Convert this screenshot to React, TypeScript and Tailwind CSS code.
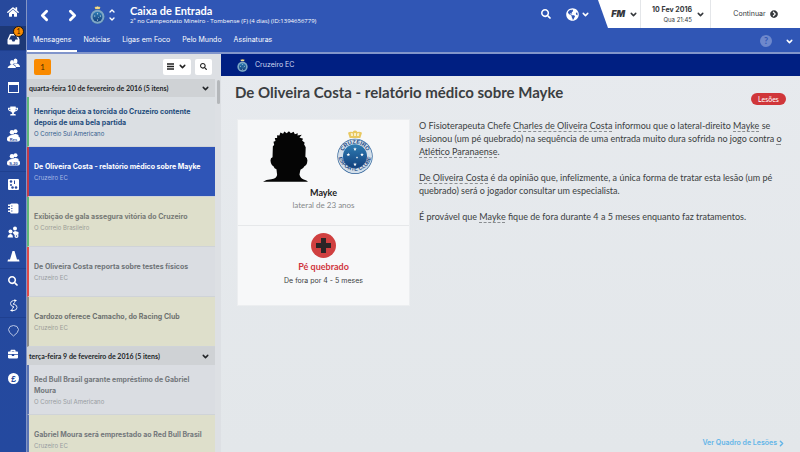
import { useState } from "react";
import type { ReactNode } from "react";
import { FaHome, FaTrophy, FaSearch, FaBriefcase, FaChevronCircleRight, FaGlobeAmericas } from "react-icons/fa";
import { FiChevronDown, FiChevronLeft, FiChevronRight, FiChevronUp } from "react-icons/fi";

function Crest({ className, detailed }: { className?: string; detailed?: boolean }) {
  return (
    <svg className={className} viewBox="0 0 108 132" aria-hidden="true">
      <defs>
        <linearGradient id="crestBlue" x1="0" y1="0" x2="0" y2="1">
          <stop offset="0" stopColor="#2f7db3" />
          <stop offset="1" stopColor="#123f7c" />
        </linearGradient>
        <path id="crestTop" d="M15 80A39 39 0 0 1 93 80" />
        <path id="crestBottom" d="M4 72A50 50 0 0 0 104 72" />
      </defs>
      <path d="M38 24L33 8Q40 3 47 6Q50 0 54 2Q58 0 61 6Q68 3 75 8L70 24Z" fill="#e8c860" />
      <path d="M42 18L41 10Q45 8 48 11V18ZM60 18V11Q64 8 67 10L66 18ZM51 18V9H57V18Z" fill="#f8efc8" />
      <circle cx="54" cy="79" r="53" fill="#2a5f98" />
      <circle cx="54" cy="79" r="51" fill={detailed ? "#d3dfea" : "#7fa6c6"} />
      <circle cx="54" cy="79" r="36" fill="url(#crestBlue)" />
      {detailed && (
        <g fill="#1c4a86" fontFamily="Liberation Sans, sans-serif" fontWeight="700" fontSize="17" textAnchor="middle">
          <text>
            <textPath href="#crestTop" startOffset="50%">CRUZEIRO</textPath>
          </text>
          <text fontSize="16">
            <textPath href="#crestBottom" startOffset="50%">ESPORTE CLUBE</textPath>
          </text>
        </g>
      )}
      <g fill="#fff">
        {[[54, 57], [34, 74], [75, 74], [60, 82], [54, 103]].map(([x, y], i) => (
          <path
            key={i}
            transform={`translate(${x} ${y}) scale(${i === 3 ? 0.6 : 0.9})`}
            d="M0-6L1.6-2H6L2.5 1L3.8 5.5L0 3L-3.8 5.5L-2.5 1L-6-2H-1.6Z"
          />
        ))}
      </g>
    </svg>
  );
}

function Silhouette() {
  return (
    <svg className="w-[45px] h-[53px]" viewBox="95 57 137 156" aria-label="Mayke" role="img">
      <path
        fill="#050505"
        d="M95 212Q104 205 120 204Q136 202 138 191L136 174Q129 172 127 165Q119 161 118 149Q117 138 124 137L125 104L129 100L127 90L133 88L131 79L138 79L138 70L145 71L148 62L156 66L160 59L167 64L174 58L180 64L188 60L192 67L201 64L200 71L213 69L206 77L217 81L214 86L222 93L220 98L225 107L224 136Q231 138 230 149Q229 162 221 165Q218 173 209 175L206 190Q209 202 219 205Q229 207 232 212Z"
      />
    </svg>
  );
}

const Svg = ({ children }: { children: ReactNode }) => (
  <svg className="w-[13px] h-[13px]" viewBox="0 0 26 26" fill="currentColor" aria-hidden="true">
    {children}
  </svg>
);

function SquadIcon({ text }: { text: string }) {
  return (
    <Svg>
      <circle cx="17" cy="4.500" r="4" />
      <circle cx="10" cy="6.500" r="4.500" />
      <path d="M3 17Q3 12 10 12Q17 8 23 12V17Z" />
      <rect x="0" y="15" width="26" height="10" rx="4" />
      <text x="13" y="23" fill="#27499c" fontFamily="Liberation Sans, sans-serif" fontWeight="700" fontSize="8" textAnchor="middle">
        {text}
      </text>
    </Svg>
  );
}

const navItems: { label: string; icon: ReactNode; divider?: boolean }[] = [
  {
    label: "Equipa",
    divider: true,
    icon: (
      <Svg>
        <ellipse cx="17" cy="8" rx="4" ry="5" />
        <path d="M14 13H20Q26 15 26 20H18Q18 16 14 15Z" />
        <ellipse cx="10" cy="11" rx="4" ry="5" />
        <path d="M7 16H13Q18 18 18 22H1Q2 18 7 16Z" />
      </Svg>
    ),
  },
  {
    label: "Calendário",
    icon: <Svg><path fillRule="evenodd" d="M2 2H24V24H2ZM4 8V22H22V8Z" /></Svg>,
  },
  { label: "Competições", icon: <FaTrophy size={10} /> },
  { label: "Reservas", icon: <SquadIcon text="Res" /> },
  { label: "Sub-20", icon: <SquadIcon text="S-20" /> },
  {
    label: "Tática",
    divider: true,
    icon: (
      <Svg>
        <rect x="2" y="2" width="22" height="22" rx="2" />
        <g fill="#27499c">
          <circle cx="8" cy="7" r="2.500" />
          <circle cx="8" cy="14" r="2" />
          <circle cx="11" cy="19" r="2.500" />
          <circle cx="18" cy="19" r="2.500" />
          <path d="M14 5H16V12H14Z" />
        </g>
      </Svg>
    ),
  },
  {
    label: "Relatórios",
    icon: (
      <Svg>
        <rect x="6" y="3" width="17" height="20" rx="3" />
        <path d="M2 5H8V8H2ZM2 11H8V14H2ZM2 17H8V20H2Z" />
        <path d="M8 8H11M8 13H11M8 18H11" stroke="#27499c" strokeWidth="1.500" />
      </Svg>
    ),
  },
  {
    label: "Equipa técnica",
    icon: (
      <Svg>
        <circle cx="16" cy="5" r="4" />
        <circle cx="7" cy="11" r="4" />
        <path d="M11 13L16 10L23 12V17L15 18Z" />
        <path d="M1 23Q2 16 8 16Q12 17 12 23Z" />
        <circle cx="19" cy="20" r="4" />
        <circle cx="19" cy="20" r="1.500" fill="#27499c" />
      </Svg>
    ),
  },
  {
    label: "Treino",
    icon: <Svg><path d="M11 2H15L20 19H24L25 23H1L2 19H6Z" /></Svg>,
  },
  { label: "Prospecção", icon: <FaSearch size={10} />, divider: true },
  {
    label: "Transferências",
    icon: (
      <Svg>
        <g fill="none" stroke="#e4eaf7" strokeWidth="2">
          <path d="M19 3H13Q7 4 7 9Q7 14 12 15L14 16" />
          <path d="M7 23H14Q20 22 20 17Q20 12 15 11L12 10" />
          <path d="M12 10L16 7M14 16L10 19" />
        </g>
        <path d="M15 0L19 3L15 7ZM11 19L7 23L11 26Z" />
      </Svg>
    ),
  },
  {
    label: "Clube",
    divider: true,
    icon: (
      <Svg>
        <path d="M6 5Q13 1 20 5L23 11Q23 17 13 24Q3 17 3 11Z" fill="none" stroke="#b9c6e6" strokeWidth="2" />
      </Svg>
    ),
  },
  { label: "Direção", icon: <FaBriefcase size={10} /> },
  {
    label: "Finanças",
    icon: (
      <Svg>
        <circle cx="13" cy="13" r="11" />
        <text x="13" y="19" fill="#27499c" fontFamily="Liberation Sans, sans-serif" fontWeight="700" fontSize="17" textAnchor="middle">£</text>
      </Svg>
    ),
  },
];

const tabs = ["Mensagens", "Notícias", "Ligas em Foco", "Pelo Mundo", "Assinaturas"];

const groups = [
  {
    title: "quarta-feira 10 de fevereiro de 2016 (5 itens)",
    items: [
      { title: "Henrique deixa a torcida do Cruzeiro contente depois de uma bela partida", from: "O Correio Sul Americano", style: "border-l-[#5fb87a] bg-[#dbdfe3] text-[#1f4c7c]", sub: "text-[#2f5b8c]" },
      { title: "De Oliveira Costa - relatório médico sobre Mayke", from: "Cruzeiro EC", style: "border-l-[#c23a4a] bg-[#2f55b7] text-white", sub: "text-[#a9b9e3]" },
      { title: "Exibição de gala assegura vitória do Cruzeiro", from: "O Correio Brasileiro", style: "border-l-[#5fb87a] bg-[#dedfcb] text-[#777a76]", sub: "text-[#9b9d97]" },
      { title: "De Oliveira Costa reporta sobre testes físicos", from: "Cruzeiro EC", style: "border-l-[#e04a4a] bg-[#dadde2] text-[#6f7478]", sub: "text-[#979ca1]" },
      { title: "Cardozo oferece Camacho, do Racing Club", from: "Cruzeiro EC", style: "border-l-[#8c8c88] bg-[#dedfcb] text-[#6f7270]", sub: "text-[#9b9d97]" },
    ],
  },
  {
    title: "terça-feira 9 de fevereiro de 2016 (5 itens)",
    items: [
      { title: "Red Bull Brasil garante empréstimo de Gabriel Moura", from: "O Correio Sul Americano", style: "border-l-[#5a74b4] bg-[#dadde2] text-[#74787c]", sub: "text-[#979ca1]" },
      { title: "Gabriel Moura será emprestado ao Red Bull Brasil", from: "Cruzeiro EC", style: "border-l-[#5a74b4] bg-[#dedfcb] text-[#74787c]", sub: "text-[#979ca1]" },
    ],
  },
];

function TextLink({ children }: { children: ReactNode }) {
  return <a href="#" className="underline decoration-dashed decoration-[#8a8d91] decoration-1 underline-offset-2">{children}</a>;
}

function Sidebar() {
  return (
    <nav className="w-[27px] shrink-0 border-r border-[#8495c4] bg-linear-to-b from-[#27499c] to-[#24499f] text-white">
      <a href="#" aria-label="Início" className="flex h-[26px] items-center justify-center pb-[2px]">
        <FaHome size={12} />
      </a>
      <a href="#" aria-label="Caixa de Entrada" className="relative flex h-6 items-center justify-center bg-[#1d3876]">
        <Svg>
          <path fillRule="evenodd" d="M6 4H20L25 15V23Q25 25 23 25H3Q1 25 1 23V15ZM8 7L4 15H9L11 19H15L17 15H22L18 7Z" />
        </Svg>
        <span className="absolute right-[2px] top-0 flex h-[11px] w-[11px] items-center justify-center rounded-full border border-[#151515] bg-[#f98a00] text-[7px] text-[#2c1c00]">1</span>
      </a>
      {navItems.map((item) => (
        <a key={item.label} href="#" aria-label={item.label} className={item.divider ? "block border-t border-[#1f4090]" : "block"}>
          <span className="flex h-6 items-center justify-center">{item.icon}</span>
        </a>
      ))}
    </nav>
  );
}

function TopBar() {
  const [active, setActive] = useState(tabs[0]);

  return (
    <header className="shrink-0 border-b-2 border-[#8195cb] bg-[#3056b5] text-white">
      <div className="flex h-7">
        <div className="flex items-center pl-[7px] pt-[2px]">
          <button aria-label="Anterior" className="flex w-5 justify-center"><FiChevronLeft size={17} strokeWidth={4} /></button>
          <button aria-label="Seguinte" className="ml-2 flex w-5 justify-center"><FiChevronRight size={17} strokeWidth={4} /></button>
          <Crest className="ml-2 h-[18px] w-[15px]" />
          <div className="ml-[3px] flex w-2 flex-col">
            <button aria-label="Clube anterior"><FiChevronUp size={8} strokeWidth={4} /></button>
            <button aria-label="Próximo clube"><FiChevronDown size={8} strokeWidth={4} /></button>
          </div>
        </div>
        <div className="ml-[14px] flex flex-col justify-center pt-[2px]">
          <h1 className="text-[11px] font-bold leading-[12px]">Caixa de Entrada</h1>
          <p className="font-['Open_Sans',sans-serif] text-[6px] font-medium leading-[8px]">2º no Campeonato Mineiro - Tombense (F) (4 dias) (ID:1394656779)</p>
        </div>
        <div className="ml-auto flex items-center">
          <button aria-label="Procurar"><FaSearch size={10} /></button>
          <button aria-label="Mundo" className="ml-[15px] mr-2 flex items-center gap-[2px]">
            <FaGlobeAmericas size={13} />
            <FiChevronDown size={9} strokeWidth={4} />
          </button>
        </div>
        <div className="flex h-full w-[202px] bg-white text-[#35383c] [clip-path:polygon(0_0,100%_0,100%_100%,10px_100%)]">
          <button className="flex w-[43px] items-center justify-end gap-1 border-r border-[#e4e6e9] pr-[2px]">
            <span className="font-[Inter,sans-serif] text-[9px] font-black italic">FM</span>
            <FiChevronDown size={9} strokeWidth={4} />
          </button>
          <button className="flex w-[70px] items-center justify-end gap-1 border-r border-[#e4e6e9] pr-[5px] font-[Inter,sans-serif]">
            <span className="flex flex-col text-right">
              <span className="text-[7px] font-bold leading-[10px]">10 Fev 2016</span>
              <span className="text-[6px] leading-[9px]">Qua 21:45</span>
            </span>
            <FiChevronDown size={9} strokeWidth={4} />
          </button>
          <button className="flex flex-1 items-center justify-center gap-1 font-[Inter,sans-serif] text-[7px]">
            Continuar
            <FaChevronCircleRight size={8} />
          </button>
        </div>
      </div>
      <div className="flex h-6">
        <div className="flex font-[Inter,sans-serif]" role="tablist">
          {tabs.map((tab) => (
            <button
              key={tab}
              role="tab"
              aria-selected={tab === active}
              onClick={() => setActive(tab)}
              className={`border-b-2 px-[6px] pt-[2px] text-[7px] ${tab === active ? "border-white" : "border-transparent"}`}
            >
              {tab}
            </button>
          ))}
        </div>
        <div className="ml-auto flex items-center gap-[13px] pr-[6px] pt-[2px]">
          <button aria-label="Ajuda" className="flex h-3 w-3 items-center justify-center rounded-full bg-[#6e88cc] text-[9px] font-bold text-[#3056b5]">?</button>
          <button aria-label="Mais"><FiChevronDown size={9} strokeWidth={4} /></button>
        </div>
      </div>
    </header>
  );
}

function MessageList() {
  return (
    <aside className="flex w-[194px] shrink-0 flex-col bg-[#dde0e4]">
      <div className="flex h-[25px] shrink-0 items-center gap-1 pl-[7px] pr-[9px]">
        <span className="mr-auto flex h-4 w-[17px] items-center justify-center rounded-[2px] bg-[#f98a00] text-[8px] text-[#4a2c00]">1</span>
        <button aria-label="Filtrar" className="flex h-4 w-7 items-center justify-center gap-1 rounded-[2px] bg-white text-[#222]">
          <svg className="h-[7px] w-[7px]" viewBox="0 0 7 7" aria-hidden="true"><path d="M0 1H7M0 3.500H7M0 6H7" stroke="currentColor" strokeWidth="1.500" /></svg>
          <FiChevronDown size={9} strokeWidth={4} />
        </button>
        <button aria-label="Procurar mensagens" className="flex h-4 w-[17px] items-center justify-center rounded-[2px] bg-white text-[#222]"><FaSearch size={7} /></button>
      </div>
      <div className="flex min-h-0 flex-1 overflow-hidden">
        <div className="min-w-0 flex-1">
          {groups.map((group) => (
            <section key={group.title}>
              <h2>
                <button className="flex h-[18px] w-full items-center justify-between bg-[#cfd2d5] pl-[2px] pr-[5px] text-[7px] font-bold text-[#222528]">
                  {group.title}
                  <FiChevronDown size={9} strokeWidth={4} />
                </button>
              </h2>
              {group.items.map((item) => (
                <a key={item.title} href="#" className={`flex h-[50px] flex-col justify-center border-l-2 border-b border-b-[#cfd3d8] px-[5px] pt-px font-[Inter,sans-serif] ${item.style}`}>
                  <span className="text-[7px] font-bold leading-[11px]">{item.title}</span>
                  <span className={`text-[6px] leading-[11px] ${item.sub}`}>{item.from}</span>
                </a>
              ))}
            </section>
          ))}
        </div>
        <div className="w-[6px] pl-[2px] pt-px"><div className="h-6 w-[3px] rounded-full bg-[#b4b7ba]" /></div>
      </div>
    </aside>
  );
}

function Report() {
  return (
    <main className="flex min-w-0 flex-1 flex-col bg-linear-to-b from-[#e7eaee] to-[#e3e7ea] text-[#3b3e41]">
      <div className="flex h-[22px] shrink-0 items-center gap-[7px] bg-[#001f82] pl-4 font-[Inter,sans-serif] text-[7px] text-[#d3dbf2]">
        <Crest className="h-[13px] w-[11px]" />
        Cruzeiro EC
      </div>
      <div className="flex items-start justify-between pl-[14px] pr-[14px] pt-[7px]">
        <h2 className="text-[15px] font-bold leading-[18px]">De Oliveira Costa - relatório médico sobre Mayke</h2>
        <span className="mt-[10px] flex h-3 w-[35px] items-center justify-center rounded-full bg-[#d0363a] text-[7px] text-white">Lesões</span>
      </div>
      <div className="flex items-start gap-[9px] pl-4 pr-[14px] pt-[14px]">
        <article className="w-[173px] shrink-0 border border-[#eceef0] bg-[#f7f8f9] text-center">
          <div className="flex h-[106px] flex-col border-b border-[#e6e8ea] pt-[9px]">
            <div className="flex items-start justify-center gap-[29px] pr-3 pt-px">
              <Silhouette />
              <Crest className="h-11 w-9" detailed />
            </div>
            <h3 className="mt-1 text-[9px] font-bold leading-[12px] text-[#222]">Mayke</h3>
            <p className="text-[8px] leading-[12px] text-[#85888b]">lateral de 23 anos</p>
          </div>
          <div className="flex h-[79px] flex-col items-center pt-[7px]">
            <svg className="h-[25px] w-[25px]" viewBox="0 0 25 25" aria-hidden="true">
              <circle cx="12.500" cy="12.500" r="12.500" fill="#d04040" />
              <path d="M10 5H15V10H20V15H15V20H10V15H5V10H10Z" fill="#2a2526" />
            </svg>
            <h3 className="mt-[3px] text-[9px] font-bold leading-[12px] text-[#d0353d]">Pé quebrado</h3>
            <p className="mt-[2px] font-[Inter,sans-serif] text-[7px] leading-[12px]">De fora por 4 - 5 meses</p>
          </div>
        </article>
        <div className="flex min-w-0 flex-1 flex-col gap-[13px] text-[9px] leading-[13px]">
          <p>
            O Fisioterapeuta Chefe <TextLink>Charles de Oliveira Costa</TextLink> informou que o lateral-direito <TextLink>Mayke</TextLink> se lesionou (um pé quebrado) na sequência de uma entrada muito dura sofrida no jogo contra <TextLink>o Atlético Paranaense</TextLink>.
          </p>
          <p>
            <TextLink>De Oliveira Costa</TextLink> é da opinião que, infelizmente, a única forma de tratar esta lesão (um pé quebrado) será o jogador consultar um especialista.
          </p>
          <p>
            É provável que <TextLink>Mayke</TextLink> fique de fora durante 4 a 5 meses enquanto faz tratamentos.
          </p>
        </div>
      </div>
      <a href="#" className="mb-1 mr-[14px] mt-auto flex items-center self-end font-[Inter,sans-serif] text-[7px] font-semibold leading-[10px] text-[#62b5e8]">
        Ver Quadro de Lesões
        <FiChevronRight size={9} strokeWidth={4} />
      </a>
    </main>
  );
}

export default function App() {
  return (
    <div className="flex h-screen overflow-hidden font-[Lato,sans-serif]">
      <Sidebar />
      <div className="flex min-w-0 flex-1 flex-col">
        <TopBar />
        <div className="flex min-h-0 flex-1">
          <MessageList />
          <Report />
        </div>
      </div>
    </div>
  );
}
